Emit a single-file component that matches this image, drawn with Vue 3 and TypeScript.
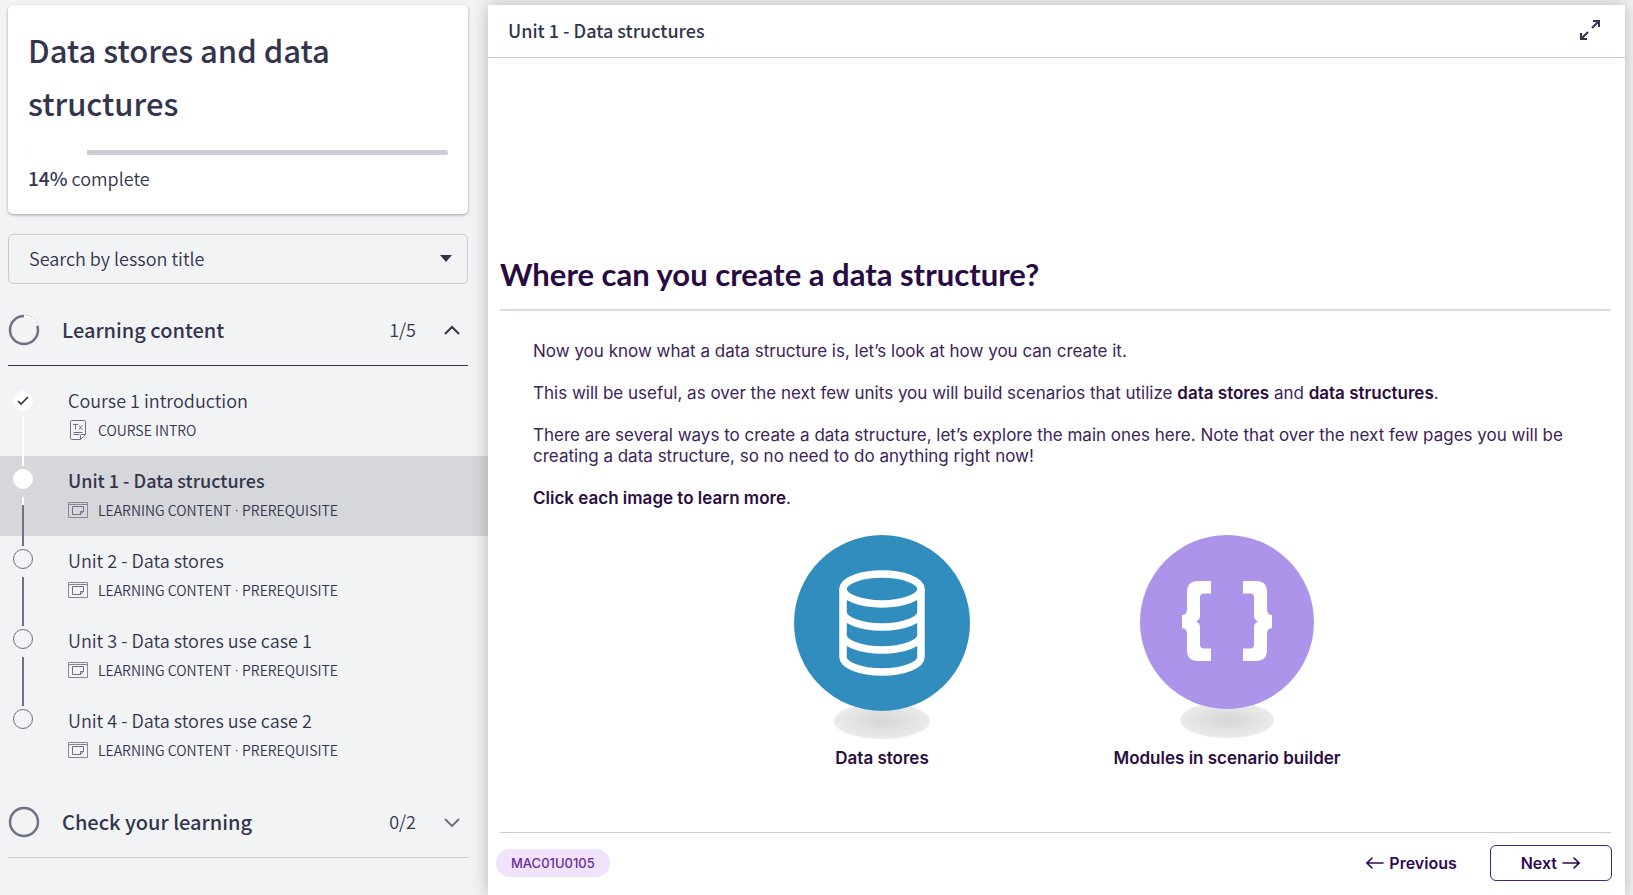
<script setup lang="ts">
import { ref } from 'vue'

interface Lesson {
  title: string
  kind: string
  required: boolean
  icon: 'text' | 'slide'
  state: 'done' | 'current' | 'todo'
}

const progress = ref(14)
const search = ref('')
const open = ref(true)

const lessons: Lesson[] = [
  { title: 'Course 1 introduction', kind: 'COURSE INTRO', required: false, icon: 'text', state: 'done' },
  { title: 'Unit 1 - Data structures', kind: 'LEARNING CONTENT', required: true, icon: 'slide', state: 'current' },
  { title: 'Unit 2 - Data stores', kind: 'LEARNING CONTENT', required: true, icon: 'slide', state: 'todo' },
  { title: 'Unit 3 - Data stores use case 1', kind: 'LEARNING CONTENT', required: true, icon: 'slide', state: 'todo' },
  { title: 'Unit 4 - Data stores use case 2', kind: 'LEARNING CONTENT', required: true, icon: 'slide', state: 'todo' },
]
</script>

<template>
  <div class="page">
    <aside class="sidebar">
      <section class="course-card">
        <h1>Data stores and data structures</h1>
        <div class="bar" role="progressbar" :aria-valuenow="progress" aria-valuemin="0" aria-valuemax="100" aria-label="Course progress">
          <div class="bar-fill" :style="{ width: progress + '%' }"></div>
        </div>
        <p class="complete"><strong>{{ progress }}%</strong> complete</p>
      </section>

      <div class="search">
        <select v-model="search" aria-label="Search by lesson title">
          <option value="">Search by lesson title</option>
          <option v-for="l in lessons" :key="l.title" :value="l.title">{{ l.title }}</option>
        </select>
        <svg class="caret" width="12" height="7" viewBox="0 0 12 7" aria-hidden="true"><path d="M0 0h12L6 7z" fill="#33354d" /></svg>
      </div>

      <button type="button" class="section-head is-open" :aria-expanded="open" @click="open = !open">
        <svg width="32" height="32" viewBox="0 0 32 32" fill="none" aria-hidden="true">
          <circle cx="16" cy="16" r="14" stroke="#6f7285" stroke-width="2.500" />
          <path d="M16 2a14 14 0 0 1 13.3 9.7" stroke="#fff" stroke-width="3" />
          <path d="M18 1.200a15 15 0 0 1 11.800 9" stroke="#c3c5cf" stroke-width="1" stroke-dasharray="2 2" />
        </svg>
        <span class="section-title">Learning content</span>
        <span class="count">1/5</span>
        <svg width="16" height="16" viewBox="0 0 16 16" fill="none" stroke="#33354d" stroke-width="2" aria-hidden="true"><path d="M1 12l7-7 7 7" /></svg>
      </button>

      <ol v-show="open" class="lessons">
        <li v-for="(l, i) in lessons" :key="l.title" :class="['lesson', l.state]">
          <div class="rail">
            <span class="dot">
              <svg v-if="l.state === 'done'" width="12" height="10" viewBox="0 0 12 10" fill="none" stroke="#333" stroke-width="1.600" aria-hidden="true"><path d="M1 5l3 3 7-7" /></svg>
            </span>
            <span v-if="i < lessons.length - 1" class="link"></span>
          </div>
          <a href="#" class="lesson-body">
            <span class="lesson-title">{{ l.title }}</span>
            <span class="meta">
              <svg v-if="l.icon === 'text'" width="20" height="20" viewBox="0 0 20 20" fill="none" stroke="#6f7285" stroke-width="1" aria-hidden="true">
                <path d="M17.500 14.500v-13q0-1-1-1h-13q-1 0-1 1v17q0 1 1 1h9zM17.500 14.500h-4q-1 0-1 1v4" />
                <path d="M5 4.500h5M7.500 4.500v5M11 5.500l3 4M14 5.500l-3 4" />
                <path d="M5.500 12.500h9M5.500 14.500h6" />
              </svg>
              <svg v-else width="20" height="16" viewBox="0 0 20 16" fill="none" stroke="#858797" stroke-width="1" aria-hidden="true">
                <path d="M.5.5h19v15H.5zM.5 2.500h19" />
                <path d="M15.500 9.500v-5h-11v8h8zM15.500 9.500h-3v3" stroke="#6f7285" />
              </svg>
              <span>{{ l.kind }}<template v-if="l.required"><span class="sep"> · </span>PREREQUISITE</template></span>
            </span>
          </a>
        </li>
      </ol>

      <button type="button" class="section-head" aria-expanded="false">
        <svg width="32" height="32" viewBox="0 0 32 32" fill="none" aria-hidden="true"><circle cx="16" cy="16" r="14" stroke="#6f7285" stroke-width="2.500" /></svg>
        <span class="section-title">Check your learning</span>
        <span class="count">0/2</span>
        <svg width="16" height="16" viewBox="0 0 16 16" fill="none" stroke="#6f7285" stroke-width="2" aria-hidden="true"><path d="M1 5l7 7 7-7" /></svg>
      </button>
    </aside>

    <main class="player">
      <header class="player-head">
        <span>Unit 1 - Data structures</span>
        <button type="button" class="icon-button" aria-label="Full screen">
          <svg width="22" height="22" viewBox="0 0 22 22" fill="none" stroke="#33354d" stroke-width="2" aria-hidden="true">
            <path d="M14 2h6v6M20 2l-7 7M8 20H2v-6M2 20l7-7" />
          </svg>
        </button>
      </header>

      <article class="slide">
        <h2>Where can you create a data structure?</h2>
        <div class="copy">
          <p>Now you know what a data structure is, let’s look at how you can create it.</p>
          <p>This will be useful, as over the next few units you will build scenarios that utilize <strong>data stores</strong> and <strong>data structures</strong>.</p>
          <p>There are several ways to create a data structure, let’s explore the main ones here. Note that over the next few pages you will be creating a data structure, so no need to do anything right now!</p>
          <p><strong>Click each image to learn more</strong>.</p>
        </div>
        <div class="gallery">
          <button type="button" class="tile">
            <svg width="180" height="206" viewBox="0 0 180 206" fill="none" aria-hidden="true">
              <defs>
                <radialGradient id="shade"><stop offset="0" stop-color="#d6d6d6" /><stop offset="1" stop-color="#ebebeb" /></radialGradient>
              </defs>
              <ellipse cx="90" cy="186" rx="48" ry="18" fill="url(#shade)" />
              <circle cx="90" cy="88" r="88" fill="#308dbd" />
              <g stroke="#fff" stroke-width="7.500">
                <ellipse cx="90" cy="54" rx="39" ry="15" />
                <path d="M51 54v68c0 8 17 15 39 15s39-7 39-15V54M51 77c0 8 17 15 39 15s39-7 39-15M51 100c0 8 17 15 39 15s39-7 39-15" />
              </g>
            </svg>
            <span>Data stores</span>
          </button>
          <button type="button" class="tile">
            <svg width="180" height="206" viewBox="0 0 180 206" fill="none" aria-hidden="true">
              <ellipse cx="90" cy="185" rx="47" ry="18" fill="url(#shade)" />
              <circle cx="90" cy="87" r="87" fill="#ac94ea" />
              <path fill="#fff" d="M74 46H61q-11 0-11 11v17q0 6-5 6v13q5 0 5 6v16q0 11 11 11h13v-12.500H67q-4 0-4-4V92q0-4-4-5.500q4-2 4-5.500V62.500q0-4 4-4h7z" />
              <path fill="#fff" d="M106 46h13q11 0 11 11v17q0 6 5 6v13q-5 0-5 6v16q0 11-11 11h-13v-12.500h7q4 0 4-4V92q0-4 4-5.500q-4-2-4-5.500V62.500q0-4-4-4h-7z" />
            </svg>
            <span>Modules in scenario builder</span>
          </button>
        </div>
      </article>

      <footer class="player-foot">
        <span class="tag">MAC01U0105</span>
        <nav class="pager" aria-label="Slides">
          <button type="button" class="prev">
            <svg width="18" height="12" viewBox="0 0 18 12" fill="none" stroke="currentColor" stroke-width="1.600" stroke-linecap="round" aria-hidden="true"><path d="M17 6H1M6 1L1 6l5 5" /></svg>
            Previous
          </button>
          <button type="button" class="next">
            Next
            <svg width="18" height="12" viewBox="0 0 18 12" fill="none" stroke="currentColor" stroke-width="1.600" stroke-linecap="round" aria-hidden="true"><path d="M1 6h16M12 1l5 5-5 5" /></svg>
          </button>
        </nav>
      </footer>
    </main>
  </div>
</template>

<style>
body {
  margin: 0;
  background: #f1f3f5;
}
</style>

<style scoped>
* {
  box-sizing: border-box;
}
.page {
  display: grid;
  grid-template-columns: 488px minmax(0, 1fr);
  min-height: 100vh;
  padding: 5px 8px 0 0;
  background: #f1f3f5;
  color: #33354d;
  font-family: "Noto Sans CJK SC", "Noto Sans", sans-serif;
  font-size: 18px;
  font-weight: 350;
  overflow: hidden;
}
button {
  border: 0;
  background: none;
  color: inherit;
  font: inherit;
  cursor: pointer;
}
svg {
  flex: none;
}
.course-card {
  margin: 0 20px 20px 8px;
  padding: 18px 20px;
  background: #fff;
  border-radius: 5px;
  box-shadow: 0 1px 3px rgba(0, 0, 0, 0.35);
}
h1 {
  margin: 0;
  font-size: 31px;
  font-weight: 500;
  line-height: 53px;
}
.bar {
  height: 5px;
  margin: 21px 0 6px;
  border-radius: 3px;
  background: #c9cbd6;
  overflow: hidden;
}
.bar-fill {
  height: 100%;
  background: #fff;
}
.complete {
  margin: 0;
  padding-bottom: 1px;
  line-height: 33px;
}
.complete strong {
  font-size: 19px;
  font-weight: 500;
}
.search {
  position: relative;
  margin: 0 20px 11px 8px;
}
.search select {
  display: block;
  width: 100%;
  height: 50px;
  padding: 0 20px 3px;
  border: 1px solid #c9cbd6;
  border-radius: 5px;
  background: transparent;
  color: inherit;
  font: inherit;
  appearance: none;
}
.caret {
  position: absolute;
  right: 16px;
  top: 21px;
  pointer-events: none;
}
.section-head {
  display: flex;
  align-items: center;
  width: 460px;
  height: 71px;
  margin: 0 20px 0 8px;
  padding: 0 8px 0 0;
  border-bottom: 1px solid #c9cbd6;
  text-align: left;
}
.section-head.is-open {
  border-bottom-color: #33354d;
}
.section-title,
.count {
  padding-bottom: 2px;
}
.section-title {
  flex: 1;
  margin-left: 22px;
  font-size: 20px;
  font-weight: 500;
}
.count {
  margin-right: 28px;
}
.lessons {
  margin: 10px 0 11px;
  padding: 0;
  list-style: none;
}
.lesson {
  display: grid;
  grid-template-columns: 46px 1fr;
  height: 80px;
}
.lesson.current {
  background: #d6d7db;
}
.rail {
  position: relative;
  display: flex;
  justify-content: center;
  padding-top: 13px;
}
.done .rail {
  padding-top: 15px;
}
.dot {
  display: grid;
  place-items: center;
  width: 20px;
  height: 20px;
  border: 1px solid #6f7285;
  border-radius: 50%;
}
.done .dot,
.current .dot {
  border-color: #fff;
  background: #fff;
}
.link {
  position: absolute;
  top: 41px;
  left: 22px;
  z-index: 1;
  width: 2px;
  height: 49px;
  background: #6f7285;
}
.done .link {
  background: #fff;
}
.current .link {
  background: linear-gradient(#fff 8px, #6f7285 8px);
}
.lesson-body {
  display: flex;
  flex-direction: column;
  padding: 9px 0 0 22px;
  color: inherit;
  text-decoration: none;
}
.lesson-title {
  line-height: 30px;
}
.current .lesson-title {
  font-weight: 500;
}
.meta {
  display: flex;
  align-items: center;
  gap: 10px;
  font-size: 14px;
  line-height: 30px;
}
.sep {
  font-family: "Noto Sans", sans-serif;
  line-height: 1;
}
.player {
  display: flex;
  flex-direction: column;
  z-index: 2;
  background: #fff;
  box-shadow: 0 0 16px rgba(0, 0, 0, 0.25);
}
.player-head {
  display: flex;
  align-items: center;
  justify-content: space-between;
  height: 53px;
  padding: 0 24px 3px 20px;
  border-bottom: 1px solid #c9cbd6;
  font-weight: 500;
}
.icon-button {
  display: flex;
  padding: 0;
}
.slide {
  flex: 1;
  margin: 0 14px 0 12px;
  padding-top: 195px;
  border-bottom: 1px solid #d3cace;
  color: #3d2358;
  font-family: Inter, "Open Sans", sans-serif;
}
h2 {
  margin: 0;
  padding-bottom: 14px;
  border-bottom: 2px solid #e0dadb;
  color: #280b42;
  font-family: Lato, Inter, sans-serif;
  font-size: 31px;
  font-weight: 700;
  line-height: 42px;
}
.copy {
  padding: 30px 30px 0 33px;
  font-size: 17px;
  font-weight: 400;
  line-height: 21px;
}
.copy p {
  margin: 0 0 21px;
}
.copy strong {
  color: #2b0d40;
  font-weight: 600;
}
.gallery {
  display: grid;
  grid-template-columns: 345px 345px;
  justify-content: center;
  padding-right: 2px;
}
.tile {
  display: flex;
  flex-direction: column;
  align-items: center;
  gap: 6px;
  padding: 5px 0 0;
  color: #2b0d40;
  font-size: 17px;
  font-weight: 600;
  line-height: 22px;
}
.player-foot {
  display: flex;
  align-items: center;
  justify-content: space-between;
  height: 62px;
  margin: 0 13px 0 8px;
  padding-bottom: 3px;
  color: #2f0a57;
  font-family: Inter, "Open Sans", sans-serif;
}
.tag {
  padding: 0 15px;
  border-radius: 14px;
  background: #f0e3fb;
  color: #6b2b9e;
  font-size: 13px;
  font-weight: 500;
  line-height: 28px;
}
.pager {
  display: flex;
  gap: 33px;
  font-size: 16px;
  font-weight: 600;
}
.pager button {
  display: flex;
  align-items: center;
  gap: 5px;
  height: 36px;
  padding: 0;
}
.pager .next {
  padding: 0 31px 0 30px;
  border: 1px solid #4b1f7c;
  border-radius: 6px;
}
</style>
